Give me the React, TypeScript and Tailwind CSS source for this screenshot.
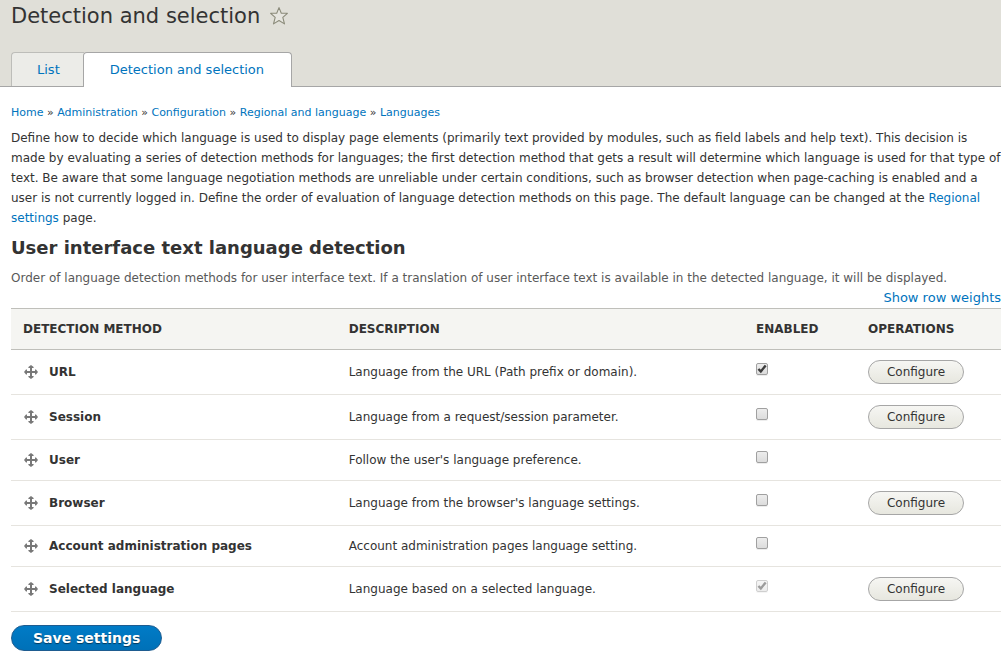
import React from "react";

type Method = {
  id: string;
  name: string;
  description: string;
  enabled?: boolean;
  locked?: boolean;
  configurable?: boolean;
};

const methods: Method[] = [
  { id: "url", name: "URL", description: "Language from the URL (Path prefix or domain).", enabled: true, configurable: true },
  { id: "session", name: "Session", description: "Language from a request/session parameter.", configurable: true },
  { id: "user", name: "User", description: "Follow the user's language preference." },
  { id: "browser", name: "Browser", description: "Language from the browser's language settings.", configurable: true },
  { id: "admin", name: "Account administration pages", description: "Account administration pages language setting." },
  { id: "selected", name: "Selected language", description: "Language based on a selected language.", enabled: true, locked: true, configurable: true },
];

const crumbs = ["Home", "Administration", "Configuration", "Regional and language", "Languages"];

function StarIcon() {
  return (
    <svg viewBox="0 0 20 20" className="size-5" fill="#e6e5df" stroke="#8b8b7a" strokeWidth="1.1" strokeLinejoin="round" aria-hidden="true">
      <path d="M10 1.6 12.3 7.3H18.4L13.8 11.3 15.5 17.9 10 14.5 4.5 17.9 6.2 11.3 1.6 7.3H7.7Z" />
    </svg>
  );
}

function MoveIcon() {
  return (
    <svg viewBox="0 0 14 14" className="size-3.5" fill="#787878" aria-hidden="true">
      <path d="M6 3H4.4V2L7 0 9.6 2V3H8V6H11V4.4H12L14 7 12 9.6H11V8H8V11H9.6V12L7 14 4.4 12V11H6V8H3V9.6H2L0 7 2 4.4H3V6H6Z" />
    </svg>
  );
}

function Checkbox({ method }: { method: Method }) {
  return (
    <span className={`grid size-3 ${method.locked ? "opacity-50" : ""}`}>
      <input
        type="checkbox"
        defaultChecked={method.enabled}
        disabled={method.locked}
        aria-label={`Enable ${method.name}`}
        className="peer col-start-1 row-start-1 size-3 appearance-none rounded-xs border border-[#a0a0a0] bg-linear-to-b from-[#ededed] to-[#dcdcdc] shadow-[0_1px_0_#ededed]"
      />
      <svg viewBox="0 0 12 12" className="pointer-events-none invisible col-start-1 row-start-1 size-3 peer-checked:visible" fill="none" stroke="#3c3c3c" strokeWidth="2.4" aria-hidden="true">
        <path d="M2.4 6 4.8 8.4 9.7 2.6" />
      </svg>
    </span>
  );
}

export default function App() {
  return (
    <div className="bg-white font-['DejaVu_Sans',sans-serif] text-xs leading-5 text-[#333]">
      <header className="border-b border-[#a6a6a6] bg-[#e0dfd8] pl-[11px]">
        <div className="flex h-[52px] items-start gap-[9px] pt-1">
          <h1 className="text-[21px] leading-6">Detection and selection</h1>
          <button type="button" aria-label="Add to shortcuts" className="pt-0.5">
            <StarIcon />
          </button>
        </div>
        <nav aria-label="Tabs" className="-mb-px flex text-[13px] text-[#0074bd]">
          <a href="#list" className="mb-px flex h-[34px] items-center rounded-tl-[4px] border border-r-0 border-b-0 border-[#bdbdb9] bg-[#ecece8] pr-6 pl-[25px]">
            List
          </a>
          <a href="#detection" aria-current="page" className="-ml-px flex h-[35px] items-center rounded-t-[4px] border border-b-0 border-[#a6a6a6] bg-white pr-[27px] pl-[26px] pb-px">
            Detection and selection
          </a>
        </nav>
      </header>

      <main className="pt-4 pl-[11px]">
        <nav aria-label="Breadcrumb" className="text-[11px]">
          <ol className="flex">
            {crumbs.map((crumb, i) => (
              <li key={crumb} className="whitespace-pre">
                {i > 0 && " » "}
                <a href="#crumb" className="text-[#0074bd]">{crumb}</a>
              </li>
            ))}
          </ol>
        </nav>

        <p className="mt-[5px]">
          Define how to decide which language is used to display page elements (primarily text provided by modules, such as
          field labels and help text). This decision is made by evaluating a series of detection methods for languages; the
          first detection method that gets a result will determine which language is used for that type of text. Be aware that
          some language negotiation methods are unreliable under certain conditions, such as browser detection when
          page-caching is enabled and a user is not currently logged in. Define the order of evaluation of language detection
          methods on this page. The default language can be changed at the{" "}
          <a href="#regional" className="text-[#0074bd]">Regional settings</a> page.
        </p>

        <form onSubmit={(e) => e.preventDefault()}>
          <h2 className="mt-2 text-lg leading-6 font-bold">User interface text language detection</h2>
          <p className="mt-2 text-[#595959]">
            Order of language detection methods for user interface text. If a translation of user interface text is available
            in the detected language, it will be displayed.
          </p>
          <div className="flex justify-end text-[13px] leading-5">
            <button type="button" className="text-[#0074bd]">Show row weights</button>
          </div>

          <table className="w-full table-fixed border-separate border-spacing-0 text-left">
            <thead className="bg-[#f5f5f2] uppercase">
              <tr className="h-[42px]">
                <th className="w-[33%] border-y border-[#bfbfba] px-3">Detection method</th>
                <th className="border-y border-[#bfbfba] px-[11px]">Description</th>
                <th className="w-28 border-y border-[#bfbfba] px-3">Enabled</th>
                <th className="w-[145px] border-y border-[#bfbfba] px-3">Operations</th>
              </tr>
            </thead>
            <tbody>
              {methods.map((m) => (
                <tr key={m.id}>
                  <th scope="row" className="border-b border-[#e6e4df] px-3 py-2.5">
                    <span className="flex items-center gap-[11px]">
                      <button type="button" aria-label={`Move ${m.name}`} className="ml-px cursor-move">
                        <MoveIcon />
                      </button>
                      {m.name}
                    </span>
                  </th>
                  <td className="border-b border-[#e6e4df] px-[11px] py-2.5">{m.description}</td>
                  <td className="border-b border-[#e6e4df] px-3 pb-1.5">
                    <Checkbox method={m} />
                  </td>
                  <td className="border-b border-[#e6e4df] px-3 py-2.5">
                    {m.configurable && (
                      <a
                        href={`#${m.id}`}
                        className="flex h-6 w-24 items-center justify-center rounded-full border border-[#a6a6a6] bg-linear-to-b from-[#f6f6f3] to-[#e7e7df]"
                      >
                        Configure
                      </a>
                    )}
                  </td>
                </tr>
              ))}
            </tbody>
          </table>

          <button
            type="submit"
            className="mt-[13px] h-[26px] rounded-full border border-[#1e5c90] bg-linear-to-b from-[#007bc6] to-[#0071b8] px-[21px] text-sm leading-5 font-bold text-white [text-shadow:0_1px_1px_rgba(0,0,0,0.5)]"
          >
            Save settings
          </button>
        </form>
      </main>
    </div>
  );
}
